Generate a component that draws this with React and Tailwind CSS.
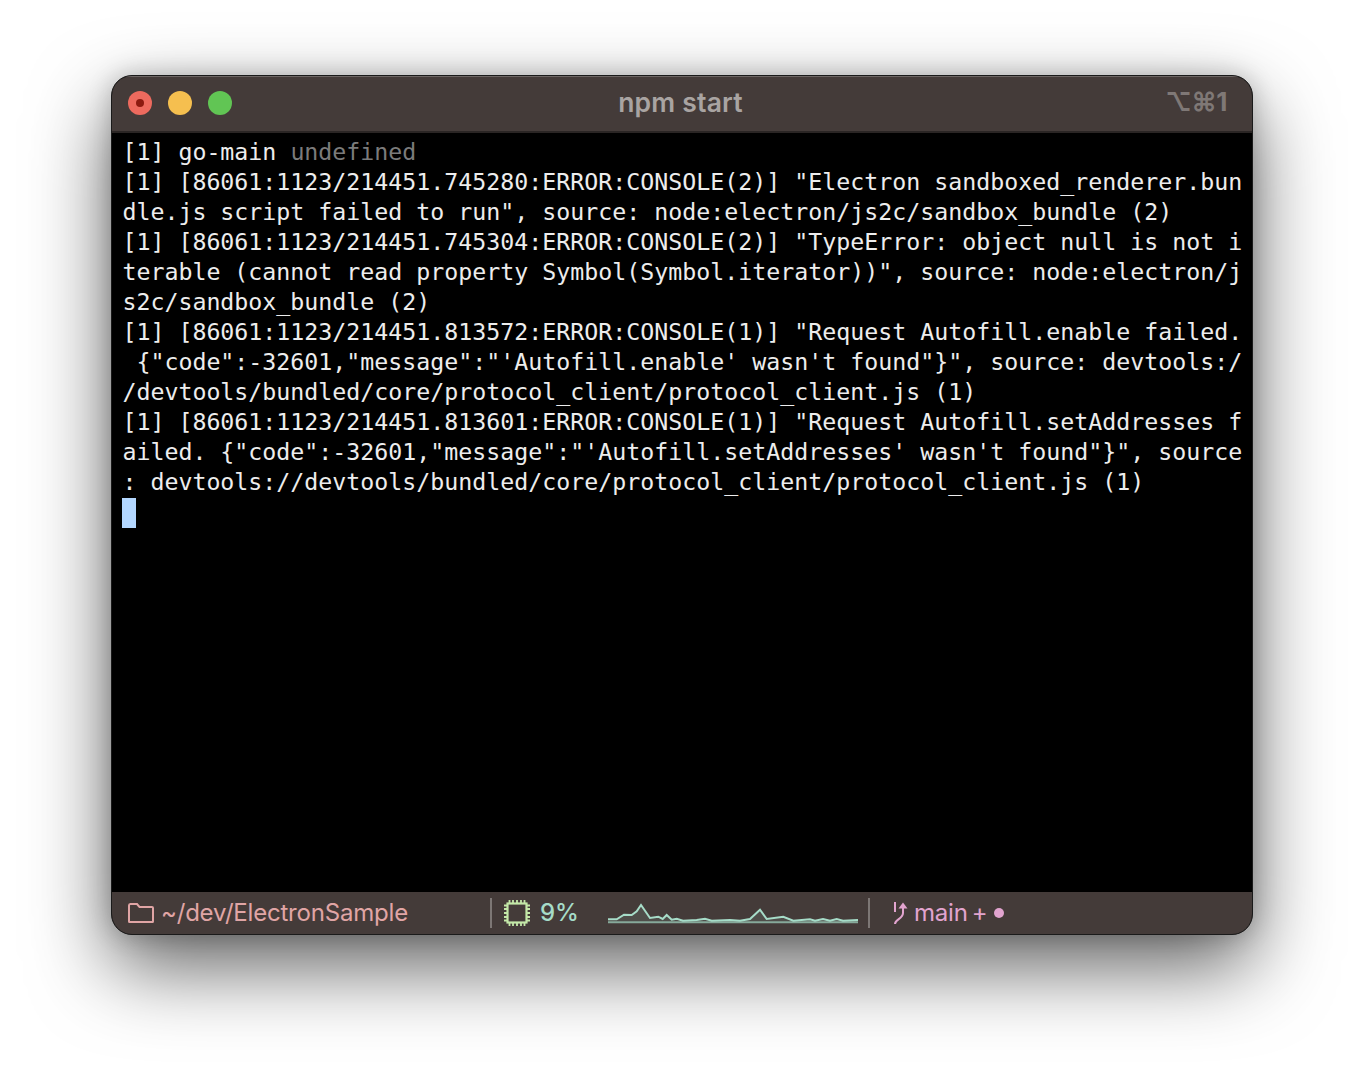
const LINES = [
  ['[1] go-main ', ' undefined'],
  ['[1] [86061:1123/214451.745280:ERROR:CONSOLE(2)] "Electron sandboxed_renderer.bun'],
  ['dle.js script failed to run", source: node:electron/js2c/sandbox_bundle (2)'],
  ['[1] [86061:1123/214451.745304:ERROR:CONSOLE(2)] "TypeError: object null is not i'],
  ['terable (cannot read property Symbol(Symbol.iterator))", source: node:electron/j'],
  ['s2c/sandbox_bundle (2)'],
  ['[1] [86061:1123/214451.813572:ERROR:CONSOLE(1)] "Request Autofill.enable failed.'],
  [' {"code":-32601,"message":"\'Autofill.enable\' wasn\'t found"}", source: devtools:/'],
  ['/devtools/bundled/core/protocol_client/protocol_client.js (1)'],
  ['[1] [86061:1123/214451.813601:ERROR:CONSOLE(1)] "Request Autofill.setAddresses f'],
  ['ailed. {"code":-32601,"message":"\'Autofill.setAddresses\' wasn\'t found"}", source'],
  [': devtools://devtools/bundled/core/protocol_client/protocol_client.js (1)'],
];

const SPARK =
  '0,12.3 8.7,12.3 16,7.7 23.7,8 28.7,4.3 33,-2 42,11 50.3,9.7 54.7,12 58.7,8 63.7,12.7 68.7,11.7 75,13.7 88.7,13 97,11.7 103.7,13.7 122,13 132,13.7 142,12 152,2.7 158.7,12 175.3,9.7 185.3,13.7 202,12.3 207,13.7 215,12 222,13.7 228.7,12 235,13.7 250,13';

function Chip() {
  return (
    <svg width="26" height="26" viewBox="0 0 26 26" fill="none" stroke="#c3e8a8" className="shrink-0">
      <rect x="3.5" y="3.5" width="19" height="19" strokeWidth="2.2" />
      <path
        d="M5.5 0v3M9 0v3M13 0v3M17 0v3M20.5 0v3M5.5 23v3M9 23v3M13 23v3M17 23v3M20.5 23v3M0 5.5h3M0 9h3M0 13h3M0 17h3M0 20.5h3M23 5.5h3M23 9h3M23 13h3M23 17h3M23 20.5h3"
        strokeWidth="1.8"
      />
    </svg>
  );
}

export default function App() {
  return (
    <div className="w-[1364px] h-[1082px] bg-white pt-[75px] pl-[111px] overflow-hidden">
      <div className="w-[1142px] h-[860px] rounded-[21px] overflow-hidden flex flex-col bg-black border border-[#1a1a1a] shadow-[0_32px_80px_rgba(0,0,0,0.62),0_0_24px_rgba(0,0,0,0.2)]">
        <div className="h-[57px] shrink-0 bg-[#443b39] border-t border-[#6d6664] border-b-2 border-b-[#2a2524] grid grid-cols-[1fr_auto_1fr] items-center pl-[16px] pr-[25px] pb-[2px]">
          <div className="flex items-center gap-[16px]">
            <div className="w-[24px] h-[24px] rounded-full bg-[#ed6a5e] flex items-center justify-center">
              <div className="w-[8px] h-[8px] rounded-full bg-[#8c1a10]" />
            </div>
            <div className="w-[24px] h-[24px] rounded-full bg-[#f5bf4f]" />
            <div className="w-[24px] h-[24px] rounded-full bg-[#61c554]" />
          </div>
          <div className="font-['Inter','Liberation_Sans',sans-serif] font-semibold text-[26.5px] leading-none text-[#a9a4a2] tracking-[0.2px] -mt-px ml-[6px]">
            npm start
          </div>
          <div className="justify-self-end font-['Inter','DejaVu_Sans',sans-serif] font-bold text-[26px] leading-none text-[#7f7876] tracking-[-0.4px] -mt-[2px]">
            ⌥⌘1
          </div>
        </div>

        <div className="flex-1 bg-black pt-[4px] pl-[10.4px] font-['DejaVu_Sans_Mono',monospace] text-[23.25px] leading-[30px] text-[#ededed]">
          {LINES.map((l, i) => (
            <div key={i} className="h-[30px] whitespace-pre">
              {l[0]}
              {l[1] && <span className="text-[#7b7b7b]">{l[1].trimStart()}</span>}
            </div>
          ))}
          <div className="w-[14px] h-[30px] mt-px -ml-[0.4px] bg-[#b3d7ff]" />
        </div>

        <div className="h-[42px] shrink-0 bg-[#443b39] flex items-center font-['Inter','Liberation_Sans',sans-serif] text-[24px] leading-none tracking-[-0.2px]">
          <div className="w-[378px] pl-[16px] flex items-center gap-[7px] text-[#e0a5a5] shrink-0">
            <svg width="26" height="20" viewBox="0 0 26 20" fill="none" stroke="#e0a5a5" strokeWidth="2" className="shrink-0">
              <path d="M1 18.500V2.500C1 1.700 1.500 1 2.300 1H9l2.500 3H24c.6 0 1 .5 1 1v13.500c0 .3-.2.5-.5.5H1.500c-.3 0-.5-.2-.5-.5z" />
            </svg>
            <span>~/dev/ElectronSample</span>
          </div>
          <div className="w-[2px] h-[30px] bg-[#7d7775] shrink-0" />
          <div className="ml-[12px] flex items-center gap-[10px] text-[#a6dcc8] w-[90px] shrink-0 font-medium">
            <Chip />
            <span>9%</span>
          </div>
          <div className="ml-[14px] w-[250px] h-[20px] shrink-0">
            <svg width="250" height="20" viewBox="0 -4 250 20" fill="none" className="overflow-visible">
              <polygon points={`${SPARK} 250,16 0,16`} fill="#a6dcc8" fillOpacity="0.12" />
              <path d="M0 15.200H250" stroke="#86a99a" strokeWidth="2" />
              <polyline points={SPARK} stroke="#a6dcc8" strokeWidth="2" />
            </svg>
          </div>
          <div className="ml-[10px] w-[2px] h-[30px] bg-[#7d7775] shrink-0" />
          <div className="ml-[23px] flex items-center text-[#e2a4cf]">
            <svg width="16" height="26" viewBox="0 0 16 26" fill="none" stroke="#e2a4cf" strokeWidth="2" className="shrink-0">
              <path d="M2 2v10" />
              <path d="M2 24c0-5 8-5 8-11V5" />
              <path d="M5.500 8.500h9L10 2.500z" fill="#e2a4cf" stroke="none" />
            </svg>
            <span className="ml-[5px]">main</span>
            <span className="ml-[4px]">+</span>
            <span className="ml-[7px] w-[10px] h-[10px] rounded-full bg-[#e2a4cf]" />
          </div>
        </div>
      </div>
    </div>
  );
}
